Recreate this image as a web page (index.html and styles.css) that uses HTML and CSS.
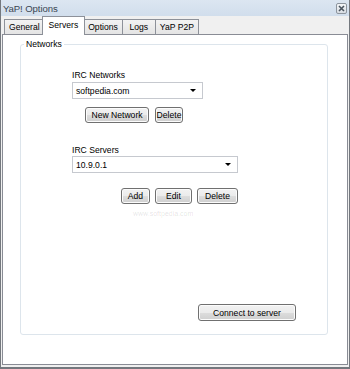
FILE: index.html
```html
<!DOCTYPE html>
<html lang="en">
  <head>
    <meta charset="UTF-8">
    <title>YaP! Options</title>
    <link rel="stylesheet" href="styles.css">
  </head>
  <body>
    <div class="window">
      <div class="titlebar">
        <span class="title">YaP! Options</span>
        <span class="close">
          <svg width="7" height="7" viewBox="0 0 7 7">
            <path d="M1 1 L6 6 M6 1 L1 6" stroke="#4b5560" stroke-width="1.6"/>
          </svg>
        </span>
      </div>
      <div class="tabs">
        <div class="tab">General</div>
        <div class="tab active">Servers</div>
        <div class="tab">Options</div>
        <div class="tab">Logs</div>
        <div class="tab">YaP P2P</div>
      </div>
      <div class="panel">
        <fieldset class="group">
          <legend>Networks</legend>
          <div class="fields">
            <div class="label">IRC Networks</div>
            <div class="combo combo-short">
              <span>softpedia.com</span>
              <i class="arrow"></i>
            </div>
            <div class="row row-left">
              <button class="btn w-new">New Network</button>
              <button class="btn w-del1">Delete</button>
            </div>

            <div class="label label-gap">IRC Servers</div>
            <div class="combo combo-long">
              <span>10.9.0.1</span>
              <i class="arrow"></i>
            </div>
            <div class="row row-right">
              <button class="btn w-add">Add</button>
              <button class="btn w-edit">Edit</button>
              <button class="btn w-del2">Delete</button>
            </div>
            <div class="watermark">www.softpedia.com</div>
          </div>
          <button class="btn connect">Connect to server</button>
        </fieldset>
      </div>
    </div>
  </body>
</html>
```

FILE: styles.css
```css
* {
  margin: 0;
  padding: 0;
  box-sizing: border-box;
}

body {
  background: #fff;
  font-family: "Liberation Sans", Arial, sans-serif;
  font-size: 8.6px;
  color: #000;
}

.window {
  width: 350px;
  height: 369px;
  display: flex;
  flex-direction: column;
  background: #f0f0f0;
  border: 1px solid #74787e;
  border-top: none;
  border-bottom-width: 2px;
}

/* title bar */
.titlebar {
  height: 16px;
  display: flex;
  align-items: center;
  justify-content: space-between;
  padding: 0 2px 0 2px;
  background: linear-gradient(#dce6f1, #d1deec);
}

.title {
  font-size: 9.6px;
  color: #3a4552;
  letter-spacing: -0.1px;
}

.close {
  width: 11px;
  height: 11px;
  display: flex;
  align-items: center;
  justify-content: center;
  border: 1px solid #8d959e;
  border-radius: 2px;
  background: linear-gradient(#f4f6f8, #d8dde3);
}

/* tabs */
.tabs {
  height: 18px;
  display: flex;
  align-items: flex-end;
  padding-left: 3px;
}

.tab {
  height: 15px;
  min-width: 34px;
  padding: 0 4px;
  line-height: 14px;
  text-align: center;
  border: 1px solid #8d9199;
  border-bottom: none;
  margin-right: -1px;
  background: linear-gradient(#f3f3f3, #e4e4e4);
}

.tab.active {
  position: relative;
  z-index: 1;
  height: 19px;
  margin: 0 -2px -1px -2px;
  padding: 0 6px;
  line-height: 16px;
  background: #fff;
}

/* tab page */
.panel {
  flex: 1;
  display: flex;
  flex-direction: column;
  margin: 0 1px 2px 1px;
  background: #fff;
  border: 1px solid #898c95;
}

.group {
  flex: 1;
  display: flex;
  flex-direction: column;
  min-width: 0;
  margin: 3px 19px 29px 17px;
  padding: 18px 0 13px 3px;
  border: 1px solid #dde5ec;
  border-radius: 3px;
}

.group legend {
  padding: 0 2px;
  line-height: 13px;
}

.fields {
  position: relative;
  margin-left: 48px;
  width: 166px;
}

.label {
  line-height: 12px;
  margin-bottom: 1px;
}

.label-gap {
  margin-top: 21px;
  margin-bottom: 0;
}

.combo {
  height: 17px;
  display: flex;
  align-items: center;
  justify-content: space-between;
  padding: 0 6px 0 3px;
  border: 1px solid #c6c9cf;
  background: #fff;
}

.combo-short {
  width: 131px;
}

.combo-long {
  width: 166px;
}

.arrow {
  width: 0;
  height: 0;
  border-left: 3px solid transparent;
  border-right: 3px solid transparent;
  border-top: 3px solid #000;
}

.row {
  display: flex;
  gap: 5px;
}

.row-left {
  margin-top: 8px;
  padding-left: 13px;
  gap: 6px;
}

.row-right {
  margin-top: 15px;
  justify-content: flex-end;
}

.btn {
  height: 16px;
  font-family: inherit;
  font-size: 8.6px;
  color: #000;
  border: 1px solid #707070;
  border-radius: 3px;
  background: linear-gradient(#f2f2f2 0%, #ebebeb 50%, #dddddd 51%, #cfcfcf 100%);
  box-shadow: inset 0 0 0 1px #fcfcfc;
}

.w-new { width: 64px; }
.w-del1 { width: 28px; }
.w-add { width: 29px; }
.w-edit { width: 37px; }
.w-del2 { width: 41px; }

.connect {
  width: 98px;
  height: 17px;
  margin-top: auto;
  margin-right: 31px;
  align-self: flex-end;
}

/* faint site watermark under the server buttons */
.watermark {
  position: absolute;
  left: 61px;
  top: 141px;
  font-size: 7px;
  color: rgba(0, 0, 0, 0.12);
  pointer-events: none;
}
```
